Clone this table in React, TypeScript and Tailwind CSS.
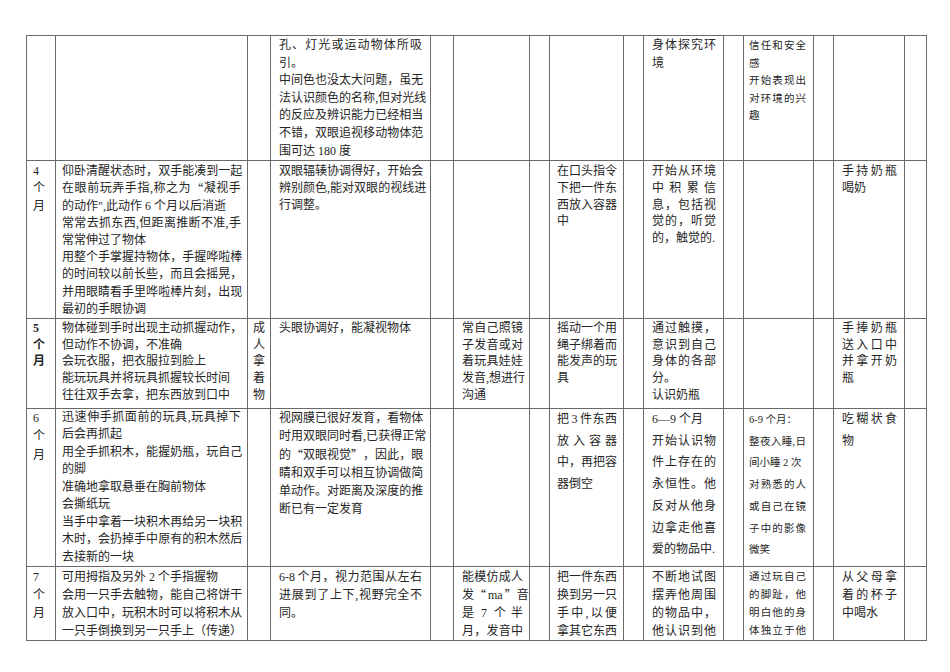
import React from "react";

type CellDef = {
  p?: string[];
  cls?: string;
  bold?: boolean;
  center?: boolean;
} | null;

type RowDef = {
  h: string;
  lead: string;
  pt: string;
  cells: CellDef[];
};

const colWidths = [
  "w-[29px]",
  "w-[192px]",
  "w-[23px]",
  "w-[160px]",
  "w-[23px]",
  "w-[76px]",
  "w-[20px]",
  "w-[74px]",
  "w-[20px]",
  "w-[80px]",
  "w-[20px]",
  "w-[70px]",
  "w-[20px]",
  "w-[71px]",
  "w-[22px]",
];

const colPad = [
  "pl-[6px] pr-[1px]",
  "pl-[6px] pr-[6px]",
  "px-0",
  "pl-[8px] pr-[8px]",
  "px-0",
  "pl-[8px] pr-[6px]",
  "px-0",
  "pl-[7px] pr-[6px]",
  "px-0",
  "pl-[8px] pr-[7px]",
  "px-0",
  "pl-[5px] pr-[7px]",
  "px-0",
  "pl-[8px] pr-[7px]",
  "px-0",
];

const SMALL = "text-[10.5px]";

const rows: RowDef[] = [
  {
    h: "h-[124px]",
    lead: "leading-[17.6px]",
    pt: "pt-[1px]",
    cells: [
      null,
      null,
      null,
      {
        p: [
          "孔、灯光或运动物体所吸|引。",
          "中间色也没太大问题，虽无|法认识颜色的名称,但对光线|的反应及辨识能力已经相当|不错，双眼追视移动物体范|围可达 180 度",
        ],
      },
      null,
      null,
      null,
      null,
      null,
      { p: ["身体探究环|境"] },
      null,
      { p: ["信任和安全|感", "开始表现出|对环境的兴|趣"], cls: SMALL },
      null,
      null,
      null,
    ],
  },
  {
    h: "h-[157px]",
    lead: "leading-[17.2px]",
    pt: "pt-[2px]",
    cells: [
      { p: ["4", "个", "月"] },
      {
        p: [
          "仰卧清醒状态时，双手能凑到一起|在眼前玩弄手指,称之为 “凝视手|的动作\",此动作 6 个月以后消逝",
          "常常去抓东西,但距离推断不准,手|常常伸过了物体",
          "用整个手掌握持物体，手握哗啦棒|的时间较以前长些，而且会摇晃，|并用眼睛看手里哗啦棒片刻，出现|最初的手眼协调",
        ],
      },
      null,
      { p: ["双眼辐辏协调得好，开始会|辨别颜色,能对双眼的视线进|行调整。"], cls: "leading-[16.7px]" },
      null,
      null,
      null,
      { p: ["在口头指令|下把一件东|西放入容器|中"], cls: "leading-[16.7px]" },
      null,
      { p: ["开始从环境|中积累信|息，包括视|觉的，听觉|的，触觉的."], cls: "leading-[16.7px]" },
      null,
      null,
      null,
      { p: ["手持奶瓶|喝奶"], cls: "leading-[16.7px]" },
      null,
    ],
  },
  {
    h: "h-[90px]",
    lead: "leading-[16.7px]",
    pt: "pt-[1px]",
    cells: [
      { p: ["5", "个", "月"], bold: true },
      {
        p: [
          "物体碰到手时出现主动抓握动作，|但动作不协调，不准确",
          "会玩衣服，把衣服拉到脸上",
          "能玩玩具并将玩具抓握较长时间",
          "往往双手去拿，把东西放到口中",
        ],
      },
      { p: ["成", "人", "拿", "着", "物"], center: true },
      { p: ["头眼协调好，能凝视物体"] },
      null,
      { p: ["常自己照镜|子发音或对|着玩具娃娃|发音,想进行|沟通"] },
      null,
      { p: ["摇动一个用|绳子绑着而|能发声的玩|具"] },
      null,
      { p: ["通过触摸，|意识到自己|身体的各部|分。", "认识奶瓶"] },
      null,
      null,
      null,
      { p: ["手捧奶瓶|送入口中|并拿开奶|瓶"] },
      null,
    ],
  },
  {
    h: "h-[158px]",
    lead: "leading-[17.5px]",
    pt: "pt-0",
    cells: [
      { p: ["6", "个", "月"], cls: "leading-[18.3px]" },
      {
        p: [
          "迅速伸手抓面前的玩具,玩具掉下|后会再抓起",
          "用全手抓积木，能握奶瓶，玩自己|的脚",
          "准确地拿取悬垂在胸前物体",
          "会撕纸玩",
          "当手中拿着一块积木再给另一块积|木时，会扔掉手中原有的积木然后|去接新的一块",
        ],
      },
      null,
      {
        p: [
          "视网膜已很好发育，看物体|时用双眼同时看,已获得正常|的“双眼视觉”，因此，眼|睛和双手可以相互协调做简|单动作。对距离及深度的推|断已有一定发育",
        ],
        cls: "leading-[18.3px]",
      },
      null,
      null,
      null,
      { p: ["把 3 件东西|放入容器|中，再把容|器倒空"], cls: "leading-[21.7px]" },
      null,
      {
        p: ["6—9 个月", "开始认识物|件上存在的|永恒性。他|反对从他身|边拿走他喜|爱的物品中."],
        cls: "leading-[21.7px]",
      },
      null,
      {
        p: ["6-9 个月：", "整夜入睡,日|间小睡 2 次", "对熟悉的人|或自己在镜|子中的影像|微笑"],
        cls: "text-[10.5px] leading-[21.7px]",
      },
      null,
      { p: ["吃糊状食|物"], cls: "leading-[21.7px]" },
      null,
    ],
  },
  {
    h: "h-[73px]",
    lead: "leading-[18px]",
    pt: "pt-[1px]",
    cells: [
      { p: ["7", "个", "月"] },
      {
        p: [
          "可用拇指及另外 2 个手指握物",
          "会用一只手去触物，能自己将饼干|放入口中，玩积木时可以将积木从|一只手倒换到另一只手上（传递）",
        ],
      },
      null,
      { p: ["6-8 个月，视力范围从左右|进展到了上下,视野完全不|同。"] },
      null,
      { p: ["能模仿成人|发“ma”音|是 7 个 半|月，发音中|"] },
      null,
      { p: ["把一件东西|换到另一只|手中,以便|拿其它东西|"] },
      null,
      { p: ["不断地试图|摆弄他周围|的物品中，|他认识到他|"] },
      null,
      { p: ["通过玩自己|的脚趾，他|明白他的身|体独立于他|"], cls: SMALL },
      null,
      { p: ["从父母拿|着的杯子|中喝水"] },
      null,
    ],
  },
];

function Quote({ q }: { q: string }) {
  return (
    <span
      className={
        "inline-block w-[1em] font-['Noto_Sans_CJK_SC',sans-serif] " +
        (q === "“" ? "text-right" : "text-left")
      }
    >
      {q}
    </span>
  );
}

function PlainLine({ s }: { s: string }) {
  const parts = s.split(/([“”])/);
  return (
    <div className="whitespace-nowrap">
      {parts.map((t, i) =>
        t === "“" || t === "”" ? <Quote key={i} q={t} /> : <span key={i}>{t}</span>
      )}
    </div>
  );
}

function JustLine({ s }: { s: string }) {
  const toks = s.match(/[A-Za-z0-9\-]+|[^\s]/g) || [];
  return (
    <div className="flex justify-between whitespace-nowrap">
      {toks.map((t, i) =>
        t === "“" || t === "”" ? (
          <Quote key={i} q={t} />
        ) : /^[A-Za-z0-9\-]+$/.test(t) ? (
          <span key={i} className={"shrink-0 " + (i === 0 ? "pr-[2px]" : "px-[2px]")}>
            {t}
          </span>
        ) : (
          <span key={i} className="shrink-0">
            {t}
          </span>
        )
      )}
    </div>
  );
}

function Para({ text }: { text: string }) {
  let lines = text.split("|");
  let all = false;
  if (lines[lines.length - 1] === "") {
    lines = lines.slice(0, -1);
    all = true;
  }
  return (
    <>
      {lines.map((l, i) =>
        all || i < lines.length - 1 ? <JustLine key={i} s={l} /> : <PlainLine key={i} s={l} />
      )}
    </>
  );
}

export default function App() {
  return (
    <div className="min-h-[672px] w-[950px] bg-white pl-[26px] pt-[35px] font-['Liberation_Serif','Noto_Sans_CJK_SC',serif] text-[12px] text-[#262626]">
      <table className="w-[900px] table-fixed border-collapse">
        <colgroup>
          {colWidths.map((w, i) => (
            <col key={i} className={w} />
          ))}
        </colgroup>
        <tbody>
          {rows.map((r, ri) => (
            <tr key={ri} className={r.h + " " + r.lead}>
              {r.cells.map((c, ci) => (
                <td
                  key={ci}
                  className={
                    "border border-[#6a6a6a] align-top " +
                    colPad[ci] +
                    " " +
                    r.pt +
                    " " +
                    (c?.cls ?? "") +
                    (c?.bold ? " font-bold" : "") +
                    (c?.center ? " text-center" : "")
                  }
                >
                  {c?.p?.map((t, i) => (
                    <Para key={i} text={t} />
                  ))}
                </td>
              ))}
            </tr>
          ))}
        </tbody>
      </table>
    </div>
  );
}
